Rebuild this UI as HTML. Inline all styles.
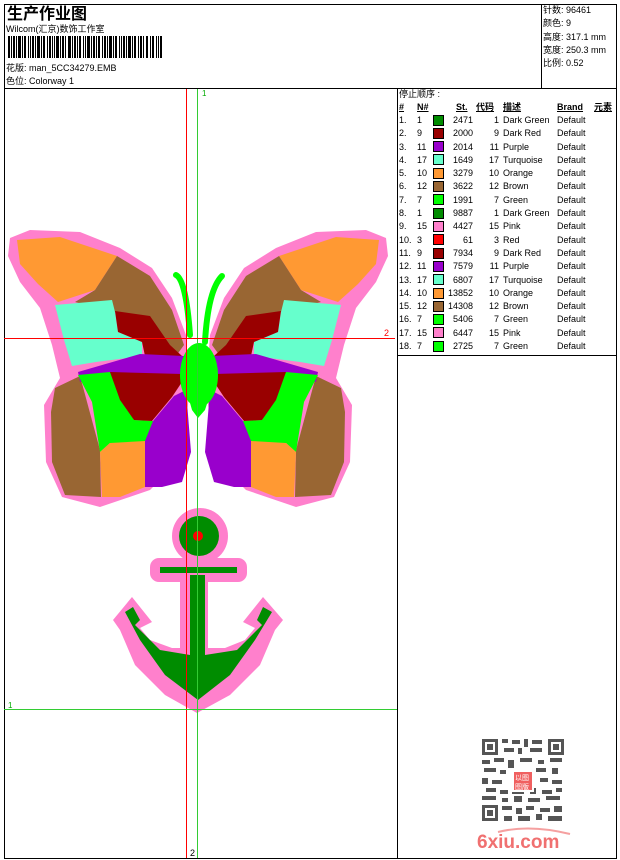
<!DOCTYPE html>
<html><head><meta charset="utf-8"><style>
*{margin:0;padding:0}
body{width:620px;height:860px;background:#fff;position:relative;overflow:hidden;font-family:"Liberation Sans","Noto Sans CJK SC",sans-serif;font-size:9px;color:#000}
.a{position:absolute;white-space:nowrap;line-height:13px}
.h{font-weight:bold;text-decoration:underline;top:0}
</style></head><body>
<svg width="620" height="860" style="position:absolute;left:0;top:0" font-family="Liberation Sans, Noto Sans CJK SC, sans-serif">
<rect x="4.5" y="4.5" width="612" height="854" fill="none" stroke="#000"/>
<line x1="4" y1="88.5" x2="617" y2="88.5" stroke="#000"/>
<line x1="541.5" y1="4" x2="541.5" y2="88" stroke="#000"/>
<line x1="397.5" y1="88" x2="397.5" y2="858" stroke="#000"/>
<line x1="397" y1="355.5" x2="617" y2="355.5" stroke="#000"/>
<g fill="#000">
<rect x="8" y="36" width="2" height="22"/><rect x="11" y="36" width="1" height="22"/><rect x="13" y="36" width="2" height="22"/><rect x="16" y="36" width="1" height="22"/><rect x="18" y="36" width="3" height="22"/><rect x="22" y="36" width="1" height="22"/><rect x="24" y="36" width="2" height="22"/><rect x="28" y="36" width="1" height="22"/><rect x="30" y="36" width="1" height="22"/><rect x="32" y="36" width="2" height="22"/><rect x="35" y="36" width="1" height="22"/><rect x="37" y="36" width="3" height="22"/><rect x="41" y="36" width="1" height="22"/><rect x="43" y="36" width="2" height="22"/><rect x="47" y="36" width="1" height="22"/><rect x="49" y="36" width="2" height="22"/><rect x="52" y="36" width="1" height="22"/><rect x="54" y="36" width="1" height="22"/><rect x="56" y="36" width="3" height="22"/><rect x="60" y="36" width="1" height="22"/><rect x="62" y="36" width="2" height="22"/><rect x="65" y="36" width="1" height="22"/><rect x="68" y="36" width="3" height="22"/><rect x="72" y="36" width="1" height="22"/><rect x="74" y="36" width="2" height="22"/><rect x="77" y="36" width="1" height="22"/><rect x="79" y="36" width="2" height="22"/><rect x="83" y="36" width="1" height="22"/><rect x="85" y="36" width="1" height="22"/><rect x="87" y="36" width="3" height="22"/><rect x="91" y="36" width="1" height="22"/><rect x="93" y="36" width="2" height="22"/><rect x="96" y="36" width="1" height="22"/><rect x="98" y="36" width="2" height="22"/><rect x="102" y="36" width="1" height="22"/><rect x="104" y="36" width="2" height="22"/><rect x="107" y="36" width="1" height="22"/><rect x="109" y="36" width="3" height="22"/><rect x="113" y="36" width="1" height="22"/><rect x="115" y="36" width="2" height="22"/><rect x="119" y="36" width="1" height="22"/><rect x="121" y="36" width="1" height="22"/><rect x="123" y="36" width="2" height="22"/><rect x="126" y="36" width="1" height="22"/><rect x="128" y="36" width="3" height="22"/><rect x="132" y="36" width="1" height="22"/><rect x="134" y="36" width="2" height="22"/><rect x="138" y="36" width="1" height="22"/><rect x="140" y="36" width="2" height="22"/><rect x="143" y="36" width="1" height="22"/><rect x="146" y="36" width="2" height="22"/><rect x="150" y="36" width="1" height="22"/><rect x="152" y="36" width="2" height="22"/><rect x="156" y="36" width="1" height="22"/><rect x="158" y="36" width="1" height="22"/><rect x="160" y="36" width="2" height="22"/>
</g>
<g id="wing">
<polygon fill="#ff80cc" points="10,238 30,230 80,232 120,248 152,268 172,298 186,335 190,390 185,425 170,470 150,490 100,507 62,497 46,462 44,405 60,378 52,345 40,308 20,282 8,256"/>
<polygon fill="#ff9933" points="17,240 60,237 117,256 95,290 58,302 38,284 20,264"/>
<polygon fill="#996633" points="117,256 150,276 172,310 184,345 176,356 150,330 115,312 75,302 95,290"/>
<polygon fill="#66ffcc" points="55,305 112,300 115,312 118,332 142,342 142,356 96,362 72,366 64,340"/>
<polygon fill="#990000" points="115,311 150,316 170,345 182,356 145,356 142,342 118,332"/>
<polygon fill="#996633" points="55,388 80,376 100,450 101,497 65,495 52,462 51,412"/>
<polygon fill="#9900cc" points="78,372 140,354 184,356 184,377 115,373 80,382"/>
<polygon fill="#00ff00" points="78,375 110,372 134,420 153,421 146,452 110,443 100,452 92,402"/>
<polygon fill="#990000" points="110,372 182,374 182,382 172,397 152,421 134,420 120,400"/>
<polygon fill="#9900cc" points="153,421 174,396 186,390 191,452 182,482 162,487 145,487 145,441"/>
<polygon fill="#ff9933" points="100,452 110,443 145,441 145,487 120,497 102,497"/>
</g>
<use href="#wing" transform="translate(396,0) scale(-1,1)"/>
<ellipse cx="199" cy="375" rx="19" ry="32" fill="#00ff00"/>
<polygon fill="#00ff00" points="185,385 213,385 205,410 198,418 192,410"/>
<path d="M176,275 Q186,280 190,335 M222,276 Q208,290 205,342" stroke="#00ff00" stroke-width="6" fill="none" stroke-linecap="round"/>
<g fill="#ff80cc">
<circle cx="200" cy="536" r="28"/>
<rect x="150" y="558" width="97" height="24" rx="9"/>
<rect x="180" y="575" width="28" height="80"/>
<polygon points="113,620 132,597 152,622 140,628 150,640 172,648 225,648 245,640 255,628 243,622 263,597 283,620 275,630 260,665 230,695 197,713 165,695 135,665 120,630"/>
</g>
<g fill="#008c00">
<circle cx="199" cy="536" r="20"/>
<rect x="160" y="567" width="77" height="6"/>
<polygon points="125,612 133,607 140,620 135,625 160,650 190,655 190,575 205,575 205,655 237,650 262,625 257,620 263,607 272,612 255,640 230,675 198,700 165,675 140,640"/>
</g>
<circle cx="198" cy="536" r="5" fill="#ff0000"/>
<line x1="186.5" y1="89" x2="186.5" y2="858" stroke="#ff0000"/>
<line x1="197.5" y1="89" x2="197.5" y2="858" stroke="#33cc33"/>
<line x1="4" y1="338.5" x2="395" y2="338.5" stroke="#ff0000"/>
<line x1="4" y1="709.5" x2="397" y2="709.5" stroke="#33cc33"/>
<text x="202" y="96" fill="#00aa00" font-size="8">1</text>
<text x="384" y="336" fill="#ff0000" font-size="9">2</text>
<text x="8" y="708" fill="#00aa00" font-size="8">1</text>
<text x="190" y="856" fill="#000" font-size="9">2</text>
<g fill="#555">
<rect x="481" y="738" width="84" height="84" fill="#fff"/>
<rect x="482" y="739" width="16" height="16"/><rect x="485" y="742" width="10" height="10" fill="#fff"/><rect x="487" y="744" width="6" height="6"/>
<rect x="548" y="739" width="16" height="16"/><rect x="551" y="742" width="10" height="10" fill="#fff"/><rect x="553" y="744" width="6" height="6"/>
<rect x="482" y="805" width="16" height="16"/><rect x="485" y="808" width="10" height="10" fill="#fff"/><rect x="487" y="810" width="6" height="6"/>
<rect x="502" y="739" width="6" height="4"/><rect x="512" y="740" width="8" height="4"/><rect x="524" y="739" width="4" height="8"/><rect x="532" y="740" width="10" height="4"/><rect x="504" y="748" width="10" height="4"/><rect x="518" y="748" width="4" height="6"/><rect x="530" y="748" width="12" height="4"/>
<rect x="482" y="760" width="8" height="4"/><rect x="494" y="758" width="10" height="4"/><rect x="508" y="760" width="6" height="8"/><rect x="520" y="758" width="12" height="4"/><rect x="538" y="760" width="6" height="4"/><rect x="550" y="758" width="12" height="4"/>
<rect x="484" y="768" width="12" height="4"/><rect x="500" y="770" width="6" height="4"/><rect x="536" y="768" width="10" height="4"/><rect x="552" y="768" width="6" height="6"/>
<rect x="482" y="778" width="6" height="6"/><rect x="492" y="780" width="10" height="4"/><rect x="540" y="778" width="8" height="4"/><rect x="552" y="780" width="10" height="4"/>
<rect x="486" y="788" width="10" height="4"/><rect x="500" y="790" width="8" height="4"/><rect x="512" y="790" width="12" height="4"/><rect x="530" y="788" width="6" height="6"/><rect x="542" y="790" width="10" height="4"/><rect x="556" y="788" width="6" height="4"/>
<rect x="482" y="796" width="14" height="4"/><rect x="502" y="798" width="6" height="4"/><rect x="514" y="796" width="8" height="6"/><rect x="528" y="798" width="12" height="4"/><rect x="546" y="796" width="14" height="4"/>
<rect x="502" y="806" width="10" height="4"/><rect x="516" y="808" width="6" height="6"/><rect x="526" y="806" width="8" height="4"/><rect x="540" y="808" width="10" height="4"/><rect x="554" y="806" width="8" height="6"/>
<rect x="504" y="816" width="8" height="5"/><rect x="518" y="816" width="12" height="5"/><rect x="536" y="814" width="6" height="6"/><rect x="548" y="816" width="14" height="5"/>
</g>
<rect x="512" y="770" width="22" height="22" fill="#fff"/>
<rect x="514" y="772" width="18" height="18" fill="#f06060"/>
<text x="515" y="780" fill="#fff" font-size="7">以图</text><text x="515" y="789" fill="#fff" font-size="7">图版</text>
<path d="M498,832 Q530,824 570,834" stroke="#f5a0a0" stroke-width="2" fill="none"/>
<text x="477" y="848" fill="#f07070" font-size="19" font-weight="bold">6xiu.com</text>
</svg>
<div class="a" style="left:7px;top:3px;font-size:16px;font-weight:bold;font-family:'Noto Sans CJK SC',sans-serif;line-height:18px">生产作业图</div>
<div class="a" style="left:6px;top:23px;font-size:9px">Wilcom(汇京)数饰工作室</div>
<div class="a" style="left:6px;top:62px;font-size:9px">花版: man_5CC34279.EMB</div>
<div class="a" style="left:6px;top:75px;font-size:9px">色位: Colorway 1</div>
<div class="a" style="left:543px;top:4px;font-size:9px;line-height:13.3px">针数: 96461<br>颜色: 9<br>高度: 317.1 mm<br>宽度: 250.3 mm<br>比例: 0.52</div>
<div class="a" style="left:399px;top:88px;font-size:9px">停止顺序 :</div>
<div style="position:absolute;left:399px;top:101px;width:218px;height:13px;font-size:9px">
<span class="a h" style="left:0">#</span><span class="a h" style="left:18px">N#</span><span class="a h" style="left:57px">St.</span><span class="a h" style="left:77px">代码</span><span class="a h" style="left:104px">描述</span><span class="a h" style="left:158px">Brand</span><span class="a h" style="left:195px">元素</span></div>
<div style="position:absolute;left:399px;top:114px;width:218px;height:240px;font-size:9px">
<div class="a" style="top:0;left:0;line-height:13.3px">1.<br>2.<br>3.<br>4.<br>5.<br>6.<br>7.<br>8.<br>9.<br>10.<br>11.<br>12.<br>13.<br>14.<br>15.<br>16.<br>17.<br>18.</div>
<div class="a" style="top:0;left:18px;line-height:13.3px">1<br>9<br>11<br>17<br>10<br>12<br>7<br>1<br>15<br>3<br>9<br>11<br>17<br>10<br>12<br>7<br>15<br>7</div>
<div class="a" style="top:0;left:34px;width:40px;text-align:right;line-height:13.3px">2471<br>2000<br>2014<br>1649<br>3279<br>3622<br>1991<br>9887<br>4427<br>61<br>7934<br>7579<br>6807<br>13852<br>14308<br>5406<br>6447<br>2725</div>
<div class="a" style="top:0;left:74px;width:26px;text-align:right;line-height:13.3px">1<br>9<br>11<br>17<br>10<br>12<br>7<br>1<br>15<br>3<br>9<br>11<br>17<br>10<br>12<br>7<br>15<br>7</div>
<div class="a" style="top:0;left:104px;line-height:13.3px">Dark Green<br>Dark Red<br>Purple<br>Turquoise<br>Orange<br>Brown<br>Green<br>Dark Green<br>Pink<br>Red<br>Dark Red<br>Purple<br>Turquoise<br>Orange<br>Brown<br>Green<br>Pink<br>Green</div>
<div class="a" style="top:0;left:158px;line-height:13.3px">Default<br>Default<br>Default<br>Default<br>Default<br>Default<br>Default<br>Default<br>Default<br>Default<br>Default<br>Default<br>Default<br>Default<br>Default<br>Default<br>Default<br>Default</div>
</div>
<svg width="620" height="860" style="position:absolute;left:0;top:0;pointer-events:none">
<g stroke="#000" stroke-width="1">
<rect x="433.5" y="115.5" width="10" height="10" fill="#008c00"/>
<rect x="433.5" y="128.5" width="10" height="10" fill="#990000"/>
<rect x="433.5" y="141.5" width="10" height="10" fill="#9900cc"/>
<rect x="433.5" y="154.5" width="10" height="10" fill="#66ffcc"/>
<rect x="433.5" y="168.5" width="10" height="10" fill="#ff9933"/>
<rect x="433.5" y="181.5" width="10" height="10" fill="#996633"/>
<rect x="433.5" y="194.5" width="10" height="10" fill="#00ff00"/>
<rect x="433.5" y="208.5" width="10" height="10" fill="#008c00"/>
<rect x="433.5" y="221.5" width="10" height="10" fill="#ff80cc"/>
<rect x="433.5" y="234.5" width="10" height="10" fill="#ff0000"/>
<rect x="433.5" y="248.5" width="10" height="10" fill="#990000"/>
<rect x="433.5" y="261.5" width="10" height="10" fill="#9900cc"/>
<rect x="433.5" y="274.5" width="10" height="10" fill="#66ffcc"/>
<rect x="433.5" y="288.5" width="10" height="10" fill="#ff9933"/>
<rect x="433.5" y="301.5" width="10" height="10" fill="#996633"/>
<rect x="433.5" y="314.5" width="10" height="10" fill="#00ff00"/>
<rect x="433.5" y="327.5" width="10" height="10" fill="#ff80cc"/>
<rect x="433.5" y="341.5" width="10" height="10" fill="#00ff00"/>
</g></svg>
</body></html>
